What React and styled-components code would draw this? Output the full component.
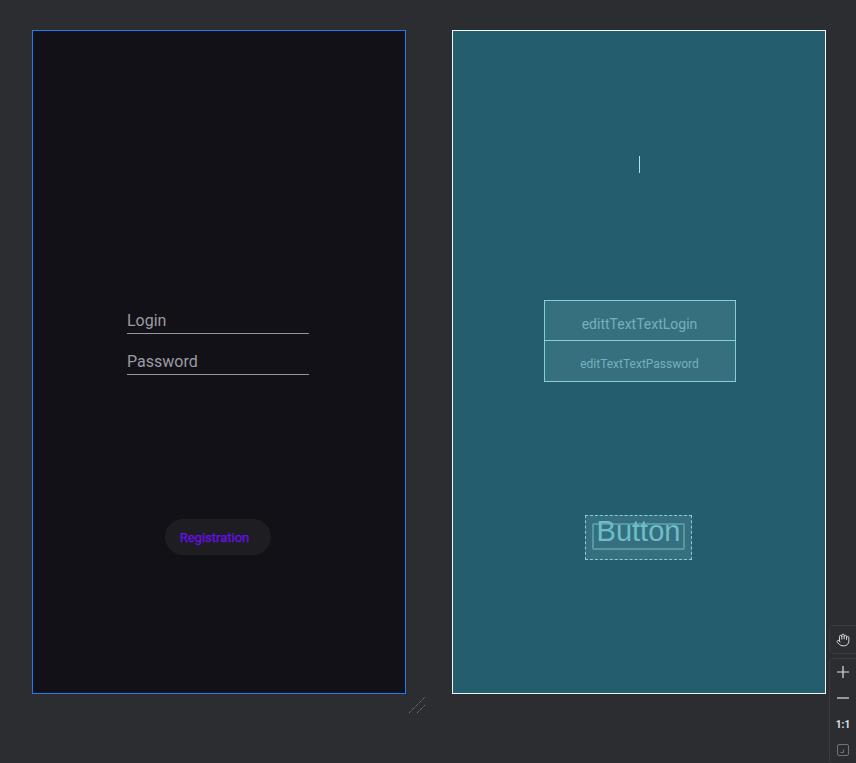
import React from "react";
import styled, { createGlobalStyle } from "styled-components";
import { Hand } from "lucide-react";

const Global = createGlobalStyle`
  html, body {
    margin: 0;
    padding: 0;
    background: #2b2d30;
    font-family: Roboto, "Liberation Sans", sans-serif;
  }
`;

function App() {
  return (
    <>
      <Global />
      <Page>
        <Canvas>
          <PhonePanel>
            <Fields>
              <Field>Login</Field>
              <Field>Password</Field>
            </Fields>
            <PillButton>Registration</PillButton>
          </PhonePanel>
          <Handle>
            <svg width="20" height="18" viewBox="0 0 20 18">
              <line x1="1" y1="17" x2="17" y2="1" stroke="#8a8c90" strokeWidth="1" strokeDasharray="1 1" />
              <line x1="9" y1="17" x2="17" y2="9" stroke="#8a8c90" strokeWidth="1" strokeDasharray="1 1" />
            </svg>
          </Handle>
          <BlueprintPanel>
            <Cursor />
            <FieldBox>
              <FieldCell size={14}>edittTextTextLogin</FieldCell>
              <FieldCell size={12} $last>editTextTextPassword</FieldCell>
            </FieldBox>
            <ButtonBox>
              <ButtonInner />
              <ButtonLabel>Button</ButtonLabel>
            </ButtonBox>
          </BlueprintPanel>
        </Canvas>
        <Toolbar>
          <ToolGroup>
            <ToolBtn $h={27}>
              <Hand size={14} strokeWidth={1.6} />
            </ToolBtn>
          </ToolGroup>
          <ToolGroup>
            <ToolBtn>
              <svg width="14" height="14" viewBox="0 0 14 14">
                <path d="M7 1v12M1 7h12" stroke="#dfe1e5" strokeWidth="1.2" />
              </svg>
            </ToolBtn>
            <ToolBtn>
              <svg width="14" height="14" viewBox="0 0 14 14">
                <path d="M1 7h12" stroke="#dfe1e5" strokeWidth="1.2" />
              </svg>
            </ToolBtn>
            <ToolBtn>
              <OneToOne>1:1</OneToOne>
            </ToolBtn>
            <ToolBtn>
              <svg width="14" height="14" viewBox="0 0 14 14">
                <rect x="1.5" y="1.5" width="11" height="11" rx="1.5" fill="none" stroke="#6f7276" strokeWidth="1" />
                <path d="M4.5 9.5h3v-3" fill="none" stroke="#6f7276" strokeWidth="1" />
              </svg>
            </ToolBtn>
          </ToolGroup>
        </Toolbar>
      </Page>
    </>
  );
}
export default App;

const Page = styled.div`
  position: relative;
  width: 856px;
  height: 763px;
  overflow: hidden;
  background: #2b2d30;
`;
const Canvas = styled.div`
  display: flex;
  align-items: flex-start;
  padding: 30px 0 0 32px;
`;
const Panel = styled.div`
  box-sizing: border-box;
  width: 374px;
  height: 664px;
  display: flex;
  flex-direction: column;
  align-items: center;
`;
const PhonePanel = styled(Panel)`
  background: #131118;
  border: 1px solid #1a7ef2;
`;
const Fields = styled.div`
  margin-top: 280px;
  display: flex;
  flex-direction: column;
  gap: 18px;
  margin-left: -2px;
`;
const Field = styled.div`
  width: 182px;
  font-size: 16px;
  line-height: 20px;
  color: #9c9ba1;
  padding-bottom: 2px;
  border-bottom: 1px solid #97969b;
`;
const PillButton = styled.div`
  box-sizing: border-box;
  margin-top: 144px;
  width: 106px;
  height: 36px;
  padding-right: 7px;
  border-radius: 18px;
  background: #1e1d22;
  color: #6a0ff0;
  font-size: 13px;
  font-weight: 400;
  -webkit-text-stroke: 0.25px #6a0ff0;
  display: flex;
  align-items: center;
  justify-content: center;
  margin-left: -2px;
`;
const Handle = styled.div`
  width: 46px;
  margin-top: 666px;
  display: flex;
  padding-left: 2px;
  box-sizing: border-box;
`;
const BlueprintPanel = styled(Panel)`
  background: #245e6e;
  border: 1px solid #f2f4f5;
`;
const Cursor = styled.div`
  margin-top: 125px;
  width: 1px;
  height: 17px;
  background: #a9e4f0;
`;
const FieldBox = styled.div`
  margin-top: 127px;
  margin-left: 1px;
  width: 190px;
  border: 1px solid #84cddd;
  background: #36707f;
  display: flex;
  flex-direction: column;
`;
const FieldCell = styled.div`
  height: 40px;
  display: flex;
  align-items: center;
  justify-content: center;
  font-size: ${(p) => p.size}px;
  color: #74b0bd;
  padding-top: 6px;
  box-sizing: border-box;
  border-bottom: ${(p) => (p.$last ? "none" : "1px solid #84cddd")};
`;
const ButtonBox = styled.div`
  position: relative;
  margin-top: 133px;
  width: 105px;
  height: 43px;
  border: 1px dashed #84cddd;
  background: #36707f;
  display: flex;
  align-items: center;
  justify-content: center;
  margin-left: -1px;
`;
const ButtonInner = styled.div`
  position: absolute;
  left: 6px;
  top: 7px;
  width: 89px;
  height: 23px;
  border: 2px solid #5497a6;
  border-radius: 2px;
`;
const ButtonLabel = styled.div`
  position: relative;
  font-family: "Liberation Sans", Arial, sans-serif;
  font-size: 29px;
  color: #6fbccb;
  margin-top: -13px;
`;
const Toolbar = styled.div`
  position: absolute;
  right: 0;
  top: 625px;
  display: flex;
  flex-direction: column;
  gap: 4px;
`;
const ToolGroup = styled.div`
  width: 26px;
  border: 1px solid #393b40;
  border-right: none;
  border-radius: 5px 0 0 5px;
  display: flex;
  flex-direction: column;
  color: #dfe1e5;
`;
const ToolBtn = styled.div`
  height: ${(p) => p.$h || 26}px;
  display: flex;
  align-items: center;
  justify-content: center;
`;
const OneToOne = styled.span`
  font-size: 10px;
  font-weight: 700;
  color: #dfe1e5;
`;
